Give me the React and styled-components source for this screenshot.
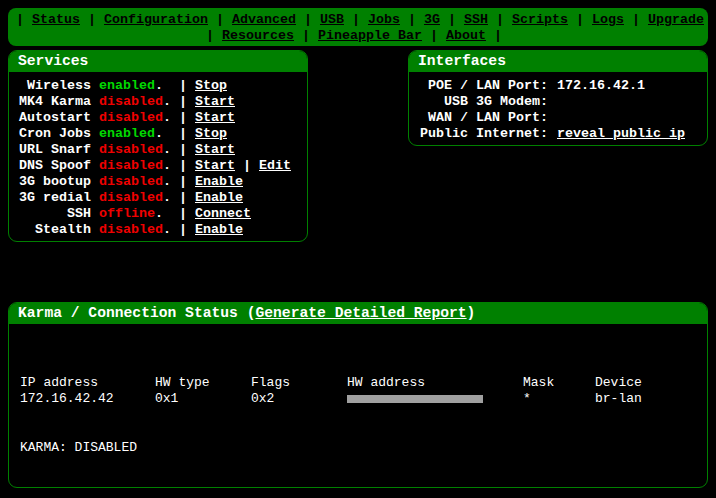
import React from "react";
import styled, { createGlobalStyle } from "styled-components";

const GREEN = "#008000";

const GlobalStyle = createGlobalStyle`
  html, body {
    background: #000;
  }
  body {
    margin: 8px;
    color: #fff;
    font-family: "Liberation Mono", "Courier New", monospace;
    font-size: 13.33px;
    font-weight: bold;
  }
`;

const NavBar = styled.div`
  background: ${GREEN};
  border-radius: 8px;
  padding: 4px 8px 2px;
  text-align: center;
  line-height: 16px;
  color: #000;
`;

const NavLine = styled.div`
  white-space: pre;
`;

const NavLink = styled.a`
  color: #000;
  text-decoration: underline;
  cursor: pointer;
`;

const TopRow = styled.div`
  display: flex;
  justify-content: space-between;
  align-items: flex-start;
  margin-top: 4px;
`;

const Panel = styled.section`
  box-sizing: border-box;
  width: ${(p) => (p.$wide ? "100%" : "300px")};
  margin-top: ${(p) => p.$gap || 0}px;
  border: 1px solid ${GREEN};
  border-radius: 9px;
  overflow: hidden;
`;

const PanelHead = styled.div`
  background: ${GREEN};
  height: 20px;
  padding: 1px 9px 0;
  line-height: 19px;
  font-size: 14.67px;
  color: #fff;
  white-space: pre;
`;

const HeadLink = styled.a`
  color: #fff;
  text-decoration: underline;
  cursor: pointer;
`;

const ServiceGrid = styled.div`
  display: grid;
  grid-template-columns: 72px 72px auto;
  column-gap: 8px;
  padding: 6px 10px 3px;
  line-height: 16px;
`;

const IfaceGrid = styled.div`
  display: grid;
  grid-template-columns: 128px auto;
  column-gap: 9px;
  padding: 6px 10px 3px 11px;
  line-height: 16px;
`;

const Label = styled.div`
  text-align: right;
  white-space: pre;
`;

const Status = styled.div`
  white-space: pre;
`;

const State = styled.span`
  color: ${(p) => (p.$on ? "#00d800" : "#f00000")};
`;

const Actions = styled.div`
  white-space: pre;
`;

const ActionLink = styled.a`
  color: #fff;
  text-decoration: underline;
  cursor: pointer;
`;

const KarmaBody = styled.div`
  padding: 51px 11px 31px;
  font-weight: normal;
  font-size: 13px;
  line-height: 16px;
`;

const ArpTable = styled.div`
  display: grid;
  grid-template-columns: 135px 96px 96px 176px 72px auto;
`;

const Cell = styled.div`
  white-space: pre;
`;

const Redacted = styled.div`
  width: 136px;
  height: 8px;
  margin-top: 4px;
  background: #a0a0a0;
`;

const KarmaState = styled.div`
  margin-top: 33px;
`;

const navTop = ["Status", "Configuration", "Advanced", "USB", "Jobs", "3G", "SSH", "Scripts", "Logs", "Upgrade"];
const navBottom = ["Resources", "Pineapple Bar", "About"];

const services = [
  { name: "Wireless", on: true, word: "enabled", actions: ["Stop"] },
  { name: "MK4 Karma", on: false, word: "disabled", actions: ["Start"] },
  { name: "Autostart", on: false, word: "disabled", actions: ["Start"] },
  { name: "Cron Jobs", on: true, word: "enabled", actions: ["Stop"] },
  { name: "URL Snarf", on: false, word: "disabled", actions: ["Start"] },
  { name: "DNS Spoof", on: false, word: "disabled", actions: ["Start", "Edit"] },
  { name: "3G bootup", on: false, word: "disabled", actions: ["Enable"] },
  { name: "3G redial", on: false, word: "disabled", actions: ["Enable"] },
  { name: "SSH", on: false, word: "offline", actions: ["Connect"] },
  { name: "Stealth", on: false, word: "disabled", actions: ["Enable"] },
];

const interfaces = [
  ["POE / LAN Port:", "172.16.42.1"],
  ["USB 3G Modem:", ""],
  ["WAN / LAN Port:", ""],
  ["Public Internet:", "reveal"],
];

function NavItems({ items, trailing }) {
  return (
    <NavLine>
      {items.map((item) => (
        <React.Fragment key={item}>
          {"| "}
          <NavLink>{item}</NavLink>
          {" "}
        </React.Fragment>
      ))}
      {trailing ? "| " : null}
    </NavLine>
  );
}

export default function App() {
  return (
    <>
      <GlobalStyle />
      <NavBar>
        <NavItems items={navTop} />
        <NavItems items={navBottom} trailing />
      </NavBar>

      <TopRow>
        <Panel>
          <PanelHead>Services</PanelHead>
          <ServiceGrid>
            {services.map((s) => (
              <React.Fragment key={s.name}>
                <Label>{s.name}</Label>
                <Status>
                  <State $on={s.on}>{s.word}</State>.
                </Status>
                <Actions>
                  {s.actions.map((a) => (
                    <React.Fragment key={a}>
                      {"| "}
                      <ActionLink>{a}</ActionLink>
                      {" "}
                    </React.Fragment>
                  ))}
                </Actions>
              </React.Fragment>
            ))}
          </ServiceGrid>
        </Panel>

        <Panel>
          <PanelHead>Interfaces</PanelHead>
          <IfaceGrid>
            {interfaces.map(([k, v]) => (
              <React.Fragment key={k}>
                <Label>{k}</Label>
                <Status>
                  {v === "reveal" ? <ActionLink>reveal public ip</ActionLink> : v}
                </Status>
              </React.Fragment>
            ))}
          </IfaceGrid>
        </Panel>
      </TopRow>

      <Panel $wide $gap={60}>
        <PanelHead>
          Karma / Connection Status (<HeadLink>Generate Detailed Report</HeadLink>)
        </PanelHead>
        <KarmaBody>
          <ArpTable>
            <Cell>IP address</Cell>
            <Cell>HW type</Cell>
            <Cell>Flags</Cell>
            <Cell>HW address</Cell>
            <Cell>Mask</Cell>
            <Cell>Device</Cell>
            <Cell>172.16.42.42</Cell>
            <Cell>0x1</Cell>
            <Cell>0x2</Cell>
            <Cell>
              <Redacted />
            </Cell>
            <Cell>*</Cell>
            <Cell>br-lan</Cell>
          </ArpTable>
          <KarmaState>KARMA: DISABLED</KarmaState>
        </KarmaBody>
      </Panel>
    </>
  );
}
